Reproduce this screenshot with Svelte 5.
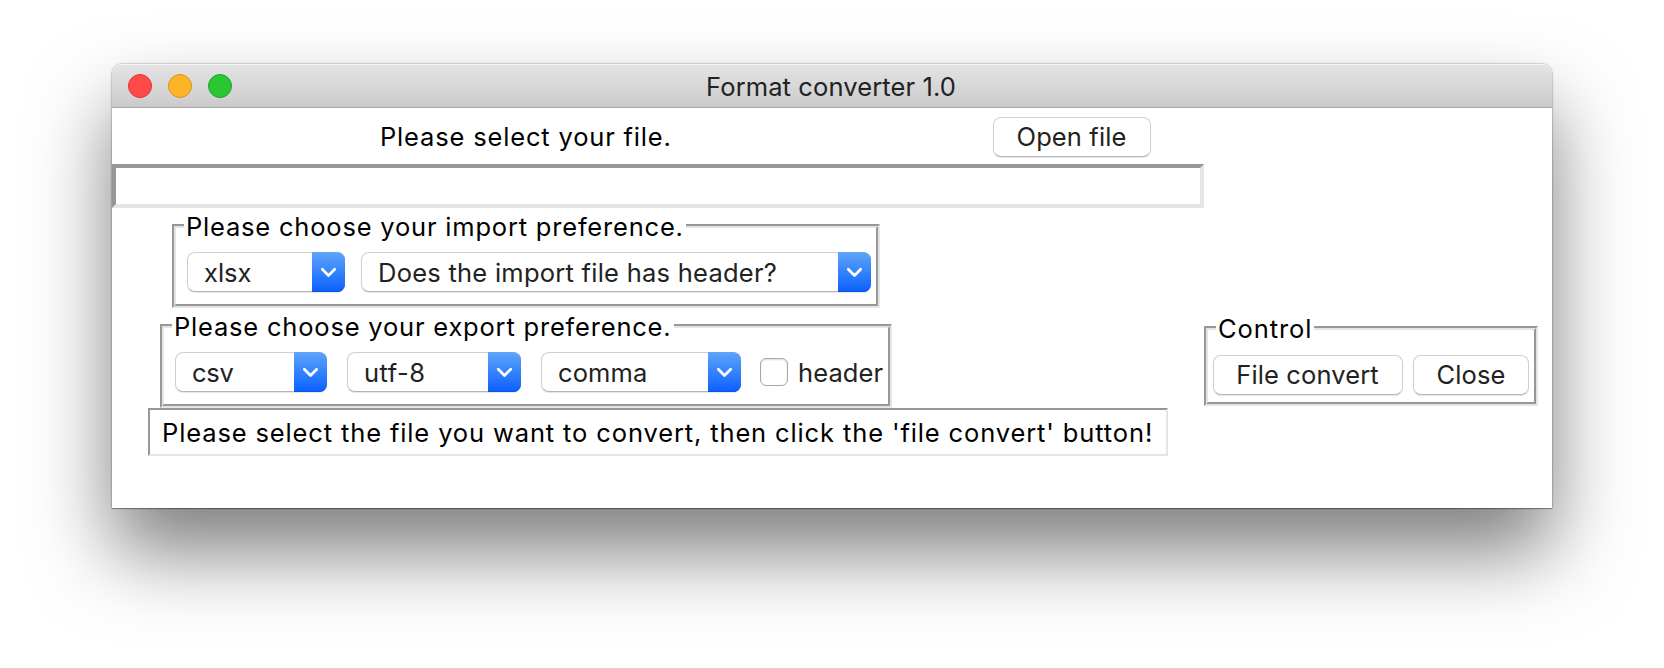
<script>
  const combosIn = [
    { text: 'xlsx', width: 158, spacing: 0 },
    { text: 'Does the import file has header?', width: 510, spacing: 0.25 },
  ];
  const combosOut = [
    { text: 'csv', width: 152, spacing: -0.3 },
    { text: 'utf-8', width: 174, spacing: 0.5 },
    { text: 'comma', width: 200, spacing: 0.1 },
  ];
</script>

{#snippet combo(c)}
  <button class="combo" style:width="{c.width}px" style:letter-spacing="{c.spacing}px">
    <span class="value">{c.text}</span>
    <span class="arrow"><svg width="33" height="40" viewBox="0 0 33 40"><path d="M10.3 17.2 L16.5 23.5 L22.7 17.2" fill="none" stroke="#fff" stroke-width="2.7" stroke-linecap="round" stroke-linejoin="round" /></svg></span>
  </button>
{/snippet}

<main class="window">
  <header>
    <div class="lights"><i class="red"></i><i class="yellow"></i><i class="green"></i></div>
    <h1>Format converter 1.0</h1>
  </header>
  <div class="body">
    <div class="left">
      <div class="open">
        <span class="prompt label">Please select your file.</span>
        <button class="push of">Open file</button>
      </div>
      <div class="entry"></div>
      <section class="group import">
        <div class="label legend">Please choose your import preference.</div>
        <div class="row">{#each combosIn as c}{@render combo(c)}{/each}</div>
      </section>
      <section class="group export">
        <div class="label legend">Please choose your export preference.</div>
        <div class="row">
          {#each combosOut as c}{@render combo(c)}{/each}
          <label class="check"><i class="box"></i><span>header</span></label>
        </div>
      </section>
      <div class="status label">Please select the file you want to convert, then click the 'file convert' button!</div>
    </div>
    <div class="right">
      <section class="group control">
        <div class="label legend">Control</div>
        <div class="row">
          <button class="push fc">File convert</button>
          <button class="push cl">Close</button>
        </div>
      </section>
    </div>
  </div>
</main>

<style>
  :global(body) { margin: 0; height: 668px; display: flow-root; background: #fff; overflow: hidden; }
  .window, button { font-family: Inter, "Liberation Sans", sans-serif; font-size: 25.5px; font-weight: 425; line-height: 32px; color: #222; }
  .window { box-sizing: border-box; width: 1440px; height: 444px; margin: 64px 112px 0; background: #fff; border-radius: 10px 10px 0 0; white-space: nowrap; box-shadow: 0 1px 1px rgba(0,0,0,.3), 0 0 2px rgba(0,0,0,.5), 0 44px 80px rgba(0,0,0,.51); }
  header { box-sizing: border-box; display: grid; grid-template-columns: 160px 1fr 160px; height: 44px; align-items: center; border-radius: 10px 10px 0 0; background: linear-gradient(#e4e4e4, #cbcbcb); border-bottom: 1px solid #a5a5a5; box-shadow: inset 0 1px #f3f3f3; }
  .lights { display: flex; gap: 16px; padding-left: 16px; }
  .lights i { box-sizing: border-box; width: 24px; height: 24px; border-radius: 50%; }
  .red { background: #fe4a49; border: 1px solid #de3537; }
  .yellow { background: #feb429; border: 1px solid #dd8f20; }
  .green { background: #2bc732; border: 1px solid #1fa224; }
  h1 { margin: 0; padding: 2px 2px 0 0; font-size: 25.5px; font-weight: 425; letter-spacing: .11px; text-align: center; }
  .label { color: #000; letter-spacing: .83px; }
  .body { display: grid; grid-template-columns: 1092px 348px; height: 400px; }
  .open { box-sizing: border-box; display: grid; grid-template-columns: 881px 158px; height: 56px; padding-top: 2px; align-items: center; }
  .prompt { padding-left: 268px; }
  .entry { box-sizing: border-box; height: 44px; border: 4px solid; border-color: #979797 #e5e5e5 #e5e5e5 #979797; }
  button { box-sizing: border-box; height: 40px; margin: 0; background: #fff; border: 1px solid #d0d0d0; border-bottom-color: #b5b5b5; border-radius: 8px; box-shadow: 0 1px 1px rgba(0,0,0,.1); }
  .push { padding: 0; text-align: center; letter-spacing: .12px; }
  .of { width: 158px; padding-right: 1px; } .fc { width: 190px; padding-right: 1px; } .cl { width: 116px; }
  .combo { display: flex; justify-content: space-between; align-items: center; padding: 0 0 0 16px; }
  .value { padding-top: 2px; }
  .arrow { flex: none; width: 33px; height: 40px; margin: 0 -1px; border-radius: 0 8px 8px 0; background: linear-gradient(#5fa5f9, #0a60ff); box-shadow: inset 0 -1px #0a54e8; }
  .arrow svg { display: block; }
  .group { position: relative; box-sizing: border-box; border: 2px solid; border-color: #979797 #e5e5e5 #e5e5e5 #979797; }
  .group::before { content: ""; position: absolute; inset: 0; border: 2px solid; border-color: #e5e5e5 #979797 #979797 #e5e5e5; pointer-events: none; }
  .legend { position: absolute; top: -15px; left: 10px; height: 32px; background: #fff; padding-left: 2px; box-sizing: border-box; }
  .import { width: 708px; height: 84px; margin: 16px 0 0 60px; }
  .import .legend, .export .legend { width: 502px; height: 26px; letter-spacing: .8px; }
  .import .row { display: flex; gap: 16px; padding: 26px 0 0 13px; }
  .export { width: 732px; height: 84px; margin: 16px 0 0 48px; }
  .export .row { display: flex; gap: 20px; padding: 26px 0 0 13px; }
  .check { display: flex; align-items: center; gap: 10px; margin-left: -1px; }
  .check span { padding-top: 2px; letter-spacing: .1px; }
  .box { box-sizing: border-box; width: 28px; height: 28px; border: 1px solid #a8a8a8; border-radius: 6px; background: #fff; box-shadow: inset 0 1px 2px rgba(0,0,0,.14); }
  .status { box-sizing: border-box; width: 1020px; height: 48px; margin-left: 36px; padding: 7px 0 0 12px; border: 2px solid; border-color: #979797 #e5e5e5 #e5e5e5 #979797; letter-spacing: .87px; }
  .control { width: 334px; height: 80px; margin-top: 218px; }
  .control .legend { width: 98px; height: 26px; letter-spacing: .9px; }
  .control .row { display: flex; gap: 10px; padding: 27px 0 0 7px; }
</style>
